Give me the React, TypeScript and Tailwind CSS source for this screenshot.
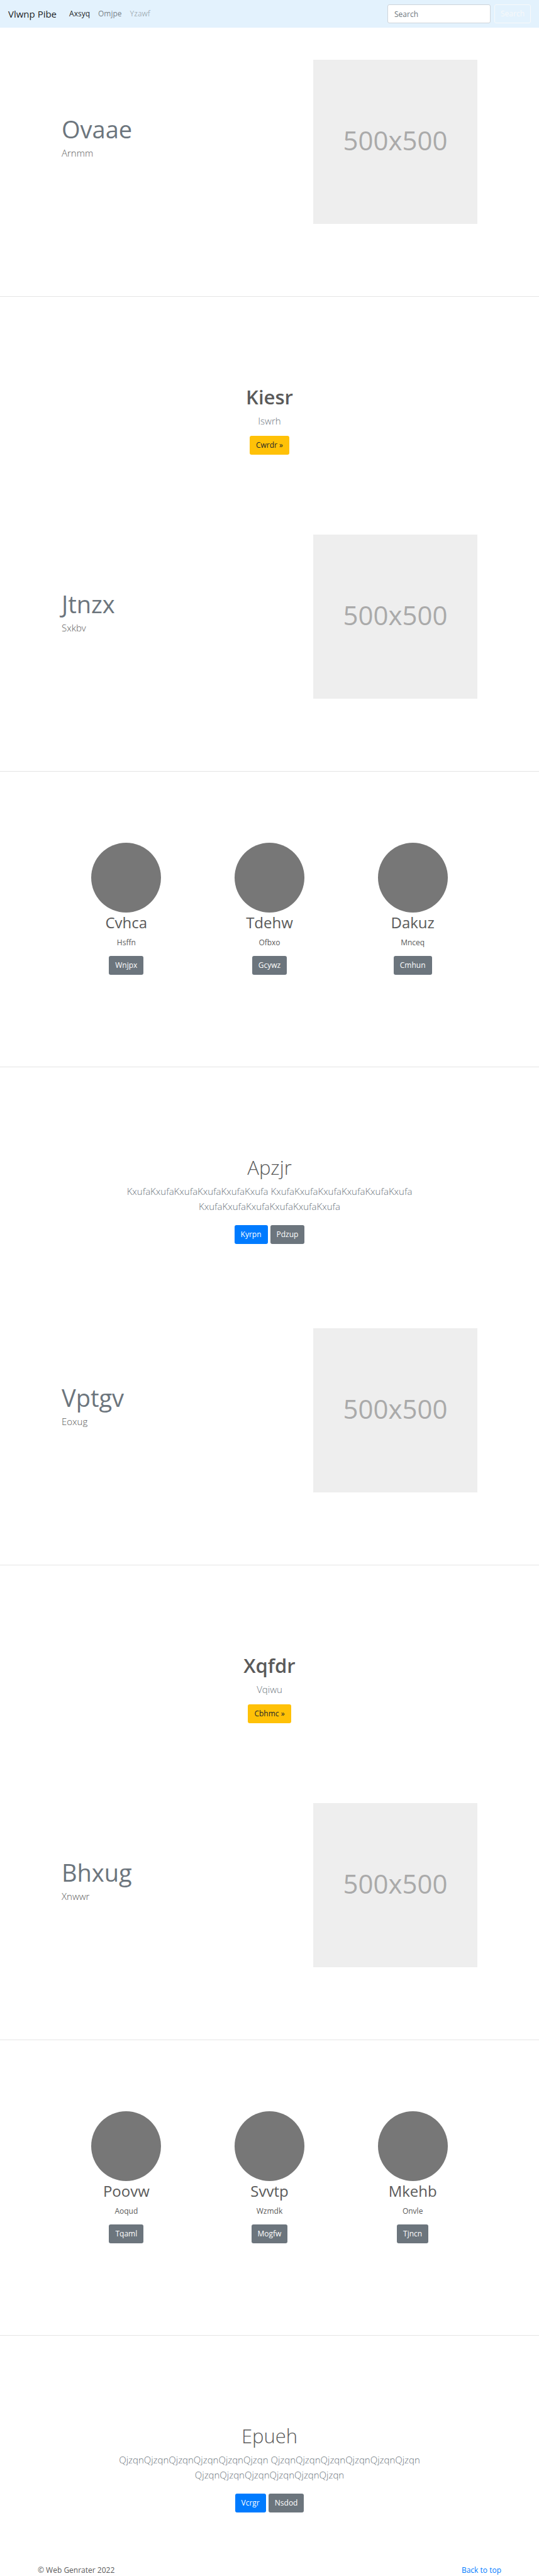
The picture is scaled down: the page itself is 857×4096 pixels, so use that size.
import type { ReactNode } from "react";

type Tone = "primary" | "secondary" | "warning";

const tones: Record<Tone, string> = {
  primary: "bg-[#007bff] text-white",
  secondary: "bg-[#6c757d] text-white",
  warning: "bg-[#ffc107] text-[#212529]",
};

function Button({ tone, children }: { tone: Tone; children: ReactNode }) {
  return (
    <button
      type="button"
      className={`h-[30px] rounded-[3px] px-[10px] text-[12px] leading-[30px] ${tones[tone]}`}
    >
      {children}
    </button>
  );
}

function Navbar() {
  return (
    <nav className="flex h-[44px] items-center bg-[#e3f2fd] px-[13px]">
      <a href="#" className="text-[15px] leading-[24px] text-black/90">
        Vlwnp Pibe
      </a>
      <div className="ml-[20px] flex gap-[13px] text-[12px] leading-[20px]">
        <a href="#" className="text-black/90">
          Axsyq
        </a>
        <a href="#" className="text-black/50">
          Omjpe
        </a>
        <a href="#" className="text-black/30">
          Yzawf
        </a>
      </div>
      <form className="ml-auto flex gap-[6px]" onSubmit={(e) => e.preventDefault()}>
        <input
          type="search"
          aria-label="Search"
          placeholder="Search"
          className="h-[30px] w-[164px] rounded-[3px] border border-[#ced4da] bg-white px-[10px] text-[12px] text-[#495057] placeholder:text-[#6c757d]"
        />
        <button
          type="submit"
          className="h-[30px] w-[58px] rounded-[3px] border border-[#f8f9fa] text-[12px] text-[#f8f9fa]"
        >
          Search
        </button>
      </form>
    </nav>
  );
}

function Hero({ title, text }: { title: string; text: string }) {
  return (
    <section className="flex items-center justify-between border-b border-black/10 px-[98px] pt-[51px] pb-[115px]">
      <div className="pb-[16px]">
        <h2 className="text-[38px] leading-[48px] text-[#6c757d]">{title}</h2>
        <p className="mt-[2px] text-[15px] leading-[24px] font-light text-[#5a5a5a]">{text}</p>
      </div>
      <div className="flex size-[261px] items-center justify-center bg-[#eeeeee] pb-[6px] text-[42px] text-[#aaaaaa]">
        500x500
      </div>
    </section>
  );
}

function Promo({ title, text, action }: { title: string; text: string; action: string }) {
  return (
    <section className="flex flex-col items-center pt-[139px] pb-[76px] text-[#5a5a5a]">
      <h2 className="text-[31px] leading-[40px] font-semibold">{title}</h2>
      <p className="mt-[6px] mb-[12px] text-[15px] leading-[24px] font-light text-[#6c757d]">{text}</p>
      <Button tone="warning">{action} »</Button>
    </section>
  );
}

function Trio({ items }: { items: [string, string, string][] }) {
  return (
    <section className="grid grid-cols-3 border-b border-black/10 px-[87px] pt-[113px] pb-[146px] text-[#5a5a5a]">
      {items.map(([title, text, action]) => (
        <div key={title} className="flex flex-col items-center">
          <div className="size-[111px] rounded-full bg-[#777777]" />
          <h2 className="text-[24px] leading-[32px]">{title}</h2>
          <p className="mt-[6px] mb-[11px] text-[12px] leading-[20px]">{text}</p>
          <Button tone="secondary">{action}</Button>
        </div>
      ))}
    </section>
  );
}

function Callout({
  title,
  word,
  actions,
}: {
  title: string;
  word: string;
  actions: [string, string];
}) {
  const block = word.repeat(6);
  return (
    <section className="flex flex-col items-center px-[180px] pt-[139px] pb-[83px] text-center">
      <h2 className="text-[31px] leading-[40px] font-light text-[#5a5a5a]">{title}</h2>
      <p className="mt-[6px] mb-[18px] text-[15px] leading-[24px] font-light text-[#6c757d]">
        {block} {block} {block}
      </p>
      <div className="flex gap-[4px]">
        <Button tone="primary">{actions[0]}</Button>
        <Button tone="secondary">{actions[1]}</Button>
      </div>
    </section>
  );
}

export default function App() {
  return (
    <div className="bg-white font-['Open_Sans','Noto_Sans',sans-serif]">
      <Navbar />
      <main>
        <Hero title="Ovaae" text="Arnmm" />
        <Promo title="Kiesr" text="Iswrh" action="Cwrdr" />
        <Hero title="Jtnzx" text="Sxkbv" />
        <Trio
          items={[
            ["Cvhca", "Hsffn", "Wnjpx"],
            ["Tdehw", "Ofbxo", "Gcywz"],
            ["Dakuz", "Mnceq", "Cmhun"],
          ]}
        />
        <Callout title="Apzjr" word="Kxufa" actions={["Kyrpn", "Pdzup"]} />
        <Hero title="Vptgv" text="Eoxug" />
        <Promo title="Xqfdr" text="Vqiwu" action="Cbhmc" />
        <Hero title="Bhxug" text="Xnwwr" />
        <Trio
          items={[
            ["Poovw", "Aoqud", "Tqaml"],
            ["Svvtp", "Wzmdk", "Mogfw"],
            ["Mkehb", "Onvle", "Tjncn"],
          ]}
        />
        <Callout title="Epueh" word="Qjzqn" actions={["Vcrgr", "Nsdod"]} />
      </main>
      <footer className="flex justify-between px-[60px] text-[12px] leading-[18px] text-[#5a5a5a]">
        <p>© Web Genrater 2022</p>
        <a href="#" className="text-[#007bff]">
          Back to top
        </a>
      </footer>
    </div>
  );
}
